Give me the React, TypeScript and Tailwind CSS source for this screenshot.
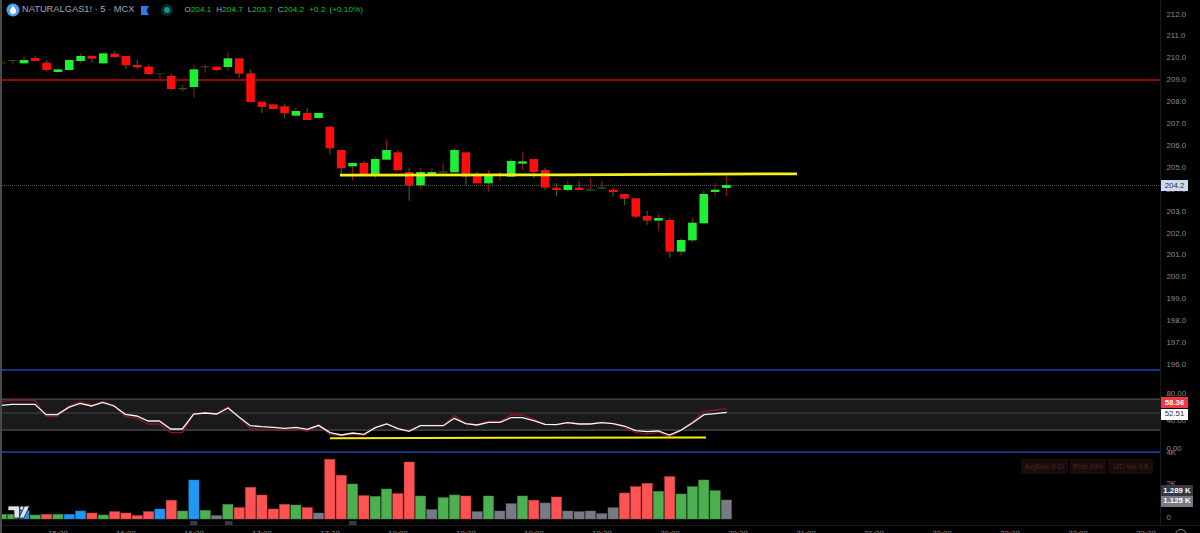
const F = "font-['Liberation_Sans',Arial,sans-serif]";

// [type, bodyTop, bodyBottom, wickTop, wickBottom] — coordinates read at 3x; r red, g green, d dark doji
type C = [string, number, number, number, number];
const first: C[] = [
  ['d',187,190,181,192],['d',180,183,180,194],['g',180,190,168,190],['r',174,183,168,183],['r',188,210,180,214],
  ['g',208,216,205,219],['g',180,210,180,210],['g',168,183,160,190],['r',168,176,168,188],['g',160,190,160,193],
  ['r',161,171,154,174],['r',168,196,168,207],['r',195,202,180,208],['r',200,222,194,222],['d',219,221,219,240],
  ['r',228,267,220,272],['d',264,268,254,274],['g',208,261,195,293],['d',199,202,193,219],['r',200,210,200,212],
  ['g',175,201,155,213],['r',175,221,175,234],['r',220,306,208,306],['r',305,321,305,339],['r',313,327,313,327],
  ['r',319,340,313,353],['g',333,347,324,352],['r',339,360,324,360],['g',339,354,339,358],
];
const second: C[] = [
  ['r',-10,55,-10,73],['r',60,115,60,133],['g',99,109,99,152],['r',99,135,93,135],['g',87,135,80,145],
  ['g',60,89,28,89],['r',67,121,60,121],['r',126,166,113,212],['g',126,166,113,178],['g',126,135,113,135],
  ['d',124,128,98,128],['g',60,127,54,127],['r',67,140,67,165],['r',135,160,125,160],['g',135,160,120,185],
  ['d',132,135,125,153],['g',93,140,87,140],['g',94,101,68,120],['r',87,126,87,145],['r',120,173,113,180],
  ['r',173,180,159,198],['g',165,180,153,185],['r',173,180,153,180],['d',178,182,145,182],['d',172,176,153,177],
  ['r',179,186,172,198],['r',192,206,192,225],['r',205,260,205,264],['r',258,272,243,284],['g',264,272,251,303],
  ['r',270,365,264,383],['g',330,365,324,377],['g',278,331,264,337],['g',192,280,179,280],['g',179,186,159,198],
  ['g',165,174,133,198],
];
const candles = [
  ...first.map(([t, a, b, c, d]) => [t, a / 3, b / 3, c / 3, d / 3] as C),
  ...second.map(([t, a, b, c, d]) => [t, 130 + a / 3, 130 + b / 3, 130 + c / 3, 130 + d / 3] as C),
];
const cx = (i: number) => 1.3 + 11.33 * i;
const bodyFill: Record<string, string> = { r: '#ff0c0c', g: '#1cf232', d: '#12641a' };
const wickFill: Record<string, string> = { r: '#146e1c', g: '#8c1010', d: '#8c1010' };

const vols: [string, number][] = [
  ['g',373],['g',373],['b',361],['g',375],['r',373],['g',373],['b',373],['b',363],['r',369],['g',375],
  ['r',365],['r',369],['r',377],['r',365],['b',357],['r',331],['g',363],['b',270],['g',361],['x',377],
  ['g',343],['r',353],['r',292],['r',315],['r',357],['r',343],['g',345],['r',353],['x',369],['r',208],
  ['r',256],['g',282],['r',317],['g',319],['g',297],['r',311],['r',216],['g',318],['x',359],['g',323],
  ['g',315],['r',318],['x',365],['g',318],['x',363],['x',341],['g',318],['r',331],['x',339],['r',321],
  ['x',363],['x',365],['x',363],['x',371],['x',353],['r',309],['r',290],['r',280],['g',304],['r',260],
  ['g',312],['g',290],['g',270],['g',302],['x',330],
];
const volFill: Record<string, string> = { r: '#ff5252', g: '#4caf50', b: '#2196f3', x: '#787b86' };
const volEdge: Record<string, string> = { r: '#c84246', g: '#3c8a40', b: '#1a78c4', x: '#5f626b' };

const a3 = (pts: number[][], off: number) => pts.map(([x, y]) => `${off + x / 3},${390 + y / 3}`);
const white = [
  ...a3([[0,47],[35,43],[105,43],[138,74],[172,74],[206,52],[240,40],[274,48],[308,37],[342,48],[376,73],[410,78],[445,93],[478,93],[512,117],[547,117],[581,72],[615,69],[650,72],[684,54],[718,82],[751,107],[785,110],[820,112],[854,115],[888,112],[922,118],[956,106],[990,128],[1024,135],[1058,129],[1092,133],[1126,113],[1160,102],[1194,116]], 0),
  ...a3([[27,124],[61,107],[95,107],[130,107],[163,85],[197,101],[231,105],[265,97],[300,97],[333,83],[367,83],[401,92],[435,103],[469,104],[503,98],[537,102],[571,102],[605,98],[639,101],[673,108],[707,122],[741,125],[775,123],[808,135],[842,121],[877,99],[912,74],[946,71],[980,67]], 400),
].join(' ');
const red = [
  ...a3([[0,36],[35,30],[105,30],[138,79],[172,79],[206,48],[240,36],[274,45],[308,35],[342,45],[376,79],[410,85],[445,102],[478,102],[512,128],[547,128],[581,72],[615,67],[650,72],[684,50],[718,84],[751,115],[785,118],[820,118],[854,122],[888,116],[922,124],[956,108],[990,133],[1024,137],[1058,133],[1092,135],[1126,113],[1160,100],[1194,116]], 0),
  ...a3([[27,122],[61,106],[95,106],[130,106],[163,76],[197,100],[231,104],[265,94],[300,94],[333,75],[367,75],[401,88],[435,103],[469,103],[503,97],[537,101],[571,101],[605,97],[639,101],[673,112],[707,128],[741,132],[775,127],[808,140],[842,121],[877,95],[912,64],[946,60],[980,56]], 400),
].join(' ');

const ticks: [string, number][] = [
  ...Array.from({ length: 17 }, (_, i): [string, number] => [(212 - i).toFixed(1), 14.5 + i * 21.9]),
  ['80.00', 394], ['40.00', 421], ['0.00', 448.5], ['4K', 453], ['2K', 484], ['0', 518],
];
const boxes: [string, number, number, number, string, string][] = [
  ['204.2', 180, 11, 27, 'bg-[#cfd8f2]', 'text-[#2a2e39] font-normal'],
  ['58.36', 397, 11, 27, 'bg-[#f23645]', 'text-white font-bold'],
  ['52.51', 408.5, 11, 27, 'bg-white', 'text-[#2a2e39] font-normal'],
  ['1.289 K', 485, 11, 32, 'bg-[#363a45]', 'text-white font-bold'],
  ['1.125 K', 496, 10.5, 32, 'bg-[#787b86]', 'text-white font-bold'],
];
const times = ['15:30','16:00','16:30','17:00','17:30','18:00','18:30','19:00','19:30','20:00','20:30','21:00','21:30','22:00','22:30','23:00','23:30'];
const ohlc = [['O', '204.1'], ['H', '204.7'], ['L', '203.7'], ['C', '204.2']];

export default function App() {
  return (
    <div className={`${F} flex h-[533px] w-[1200px] flex-col overflow-hidden border-l-2 border-[#4a4a4a] bg-black`}>
      <div className="flex h-[525px] shrink-0">
        <main className="relative flex w-[1158px] flex-col">
          <svg className="block h-[392px] w-[1158px]" viewBox="2 0 1158 392">
            <rect x="0" y="79.2" width="1160" height="1.6" fill="#b20c0c" />
            <line x1="0" y1="185.5" x2="1160" y2="185.5" stroke="#555" strokeWidth="1" strokeDasharray="1 1" />
            <rect x="0" y="369.2" width="1160" height="1.6" fill="#1a3fa8" />
            {candles.map(([t, a, b, c, d], i) => (
              <g key={i}>
                <rect x={cx(i) - 0.6} y={c} width="1.2" height={d - c} fill={wickFill[t]} />
                <rect x={cx(i) - 4.3} y={a} width="8.6" height={b - a} fill={bodyFill[t]} />
              </g>
            ))}
            <path d="M340 175.2 L560 174.8 L797 173.8" stroke="#f6f01a" strokeWidth="2.8" fill="none" />
          </svg>
          <svg className="block h-[61px] w-[1158px]" viewBox="2 392 1158 61">
            <rect x="0" y="399" width="1160" height="31" fill="#1a1a1a" />
            <rect x="0" y="398.5" width="1160" height="1.2" fill="#525252" />
            <rect x="0" y="412.5" width="1160" height="1.2" fill="#3c3c3c" />
            <rect x="0" y="429.5" width="1160" height="1.2" fill="#525252" />
            <polyline points={red} fill="none" stroke="#8a1420" strokeWidth="1.3" />
            <polyline points={white} fill="none" stroke="#f4f4f4" strokeWidth="1.3" />
            <path d="M330 438.2 L706 437.4" stroke="#f5f000" strokeWidth="2" fill="none" />
            <rect x="0" y="451.3" width="1160" height="1.6" fill="#1a3fa8" />
          </svg>
          <svg className="block h-[72px] w-[1158px]" viewBox="2 453 1158 72">
            {vols.map(([t, y], i) => {
              const top = 390 + y / 3;
              return <rect key={i} x={cx(i) - 5.1} y={top} width="10.2" height={519 - top} fill={volFill[t]} stroke={volEdge[t]} strokeWidth="0.5" />;
            })}
            {[190, 225, 349].map((x) => <rect key={x} x={x} y="521" width="7.5" height="4" fill="#363a45" />)}
            <path d="M8 506h11.5v12h-5.5v-7.5H8z" fill="#dfe2ea" stroke="#1c1c22" strokeWidth="0.8" />
            <circle cx="22" cy="508.2" r="2.2" fill="#dfe2ea" stroke="#1c1c22" strokeWidth="0.6" />
            <path d="M24.5 506h5l-5.5 12h-5z" fill="#dfe2ea" stroke="#1c1c22" strokeWidth="0.8" />
          </svg>

          <div className="absolute left-[4px] top-0 flex h-5 items-center text-[#a2a8b4]">
            <svg className="h-[14px] w-[14px]" viewBox="0 0 14 14">
              <circle cx="7" cy="7" r="6.5" fill="#4ba3f0" />
              <path d="M7 2.8C8.6 5 10 6.4 10 8a3 3 0 0 1-6 0C4 6.4 5.4 5 7 2.8z" fill="#fff" />
            </svg>
            <span className="ml-[2px] whitespace-nowrap text-[9.3px]">NATURALGAS1! · 5 · MCX</span>
            <svg className="ml-[7px] h-[9px] w-[8px]" viewBox="0 0 8 9">
              <path d="M0 0h8L5.6 4.5 8 9H0z" fill="#2f78f0" />
            </svg>
            <svg className="ml-[12px] h-[12px] w-[12px]" viewBox="0 0 12 12">
              <circle cx="6" cy="6" r="6" fill="#0b2b2b" />
              <circle cx="6" cy="6" r="3" fill="#0b9a86" />
            </svg>
            <div className="ml-[11px] flex gap-[4px] whitespace-nowrap text-[8px] tracking-[0.1px]">
              {ohlc.map(([k, v]) => (
                <span key={k} className="mr-[1px]">{k}<span className="text-[#14c832]">{v}</span></span>
              ))}
              <span className="text-[#14c832]">+0.2</span>
              <span className="text-[#14c832]">(+0.10%)</span>
            </div>
          </div>

          <div className="absolute left-[1019px] top-[459px] flex gap-[2px] text-[6.5px] text-[#46282a]">
            <span className="flex h-[15px] w-[47px] items-center justify-center whitespace-nowrap bg-[#1a0b0b]">Avg$Vol: 0 Cr</span>
            <span className="flex h-[15px] w-[36px] items-center justify-center whitespace-nowrap bg-[#1a0b0b]">RVol: 69%</span>
            <span className="flex h-[15px] w-[45px] items-center justify-center whitespace-nowrap bg-[#1a0b0b]">U/D Vol: 0.8</span>
          </div>
        </main>

        <aside className="relative w-10 border-l border-[#1c1c1c] text-[7.8px] text-[#8a8d95]">
          {ticks.map(([t, y]) => (
            <span key={t} className="absolute left-[5.5px] -translate-y-1/2 leading-none" style={{ top: y }}>{t}</span>
          ))}
          {boxes.map(([t, y, h, w, bg, fg]) => (
            <span
              key={t}
              className={`absolute left-0 flex items-center justify-center whitespace-nowrap text-[7.8px] ${bg} ${fg}`}
              style={{ top: y, height: h, width: w }}
            >
              {t}
            </span>
          ))}
        </aside>
      </div>

      <footer className="relative flex h-2 shrink-0 border-t border-[#1c1c1c] pl-[22px] pt-[3.5px] text-[7.8px] leading-none text-[#8a8d95]">
        {times.map((t) => (
          <span key={t} className="w-[68px] shrink-0 text-center">{t}</span>
        ))}
        <span className="absolute left-[1173px] top-[3px] h-3 w-3 rounded-full border border-[#8a8d95]" />
      </footer>
    </div>
  );
}
